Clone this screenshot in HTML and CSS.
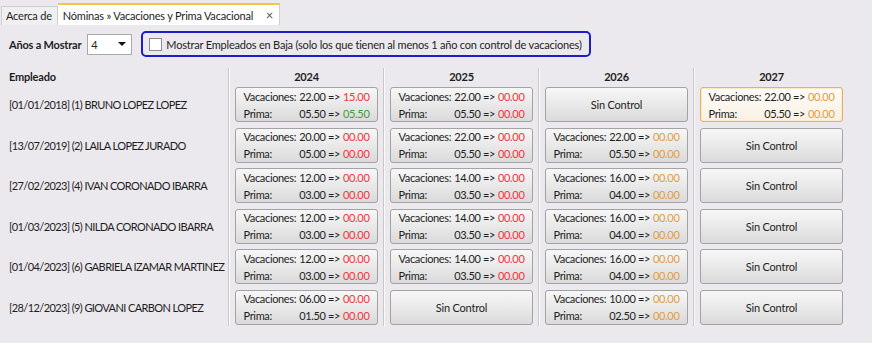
FILE: index.html
```html
<!DOCTYPE html>
<html lang="es">
<head>
    <meta charset="UTF-8">
    <title>Nóminas » Vacaciones y Prima Vacacional</title>
    <link rel="stylesheet" href="styles.css">
</head>
<body>

    <!-- Pestañas -->
    <div class="tabs">
        <div class="tab">Acerca de</div>
        <div class="tab active">Nóminas » Vacaciones y Prima Vacacional <span class="close">×</span></div>
    </div>

    <!-- Filtros -->
    <div class="toolbar">
        <span class="lbl">Años a Mostrar</span>
        <div class="combo"><span>4</span><span class="arrow"></span></div>
        <label class="baja">
            <span class="check"></span>
            Mostrar Empleados en Baja (solo los que tienen al menos 1 año con control de vacaciones)
        </label>
    </div>

    <!-- Tabla de años -->
    <div class="grid">
        <div class="emp-col">
            <div class="head">Empleado</div>
            <div class="name">[01/01/2018] (1) BRUNO LOPEZ LOPEZ</div>
            <div class="name">[13/07/2019] (2) LAILA LOPEZ JURADO</div>
            <div class="name">[27/02/2023] (4) IVAN CORONADO IBARRA</div>
            <div class="name">[01/03/2023] (5) NILDA CORONADO IBARRA</div>
            <div class="name">[01/04/2023] (6) GABRIELA IZAMAR MARTINEZ</div>
            <div class="name">[28/12/2023] (9) GIOVANI CARBON LOPEZ</div>
        </div>

        <div class="year-col">
            <div class="head year">2024</div>
            <div class="btn"><div class="vals">
                <span>Vacaciones:</span><span class="num">22.00 =&gt;</span><span class="red">15.00</span>
                <span>Prima:</span><span class="num">05.50 =&gt;</span><span class="green">05.50</span>
            </div></div>
            <div class="btn"><div class="vals">
                <span>Vacaciones:</span><span class="num">20.00 =&gt;</span><span class="red">00.00</span>
                <span>Prima:</span><span class="num">05.00 =&gt;</span><span class="red">00.00</span>
            </div></div>
            <div class="btn"><div class="vals">
                <span>Vacaciones:</span><span class="num">12.00 =&gt;</span><span class="red">00.00</span>
                <span>Prima:</span><span class="num">03.00 =&gt;</span><span class="red">00.00</span>
            </div></div>
            <div class="btn"><div class="vals">
                <span>Vacaciones:</span><span class="num">12.00 =&gt;</span><span class="red">00.00</span>
                <span>Prima:</span><span class="num">03.00 =&gt;</span><span class="red">00.00</span>
            </div></div>
            <div class="btn"><div class="vals">
                <span>Vacaciones:</span><span class="num">12.00 =&gt;</span><span class="red">00.00</span>
                <span>Prima:</span><span class="num">03.00 =&gt;</span><span class="red">00.00</span>
            </div></div>
            <div class="btn"><div class="vals">
                <span>Vacaciones:</span><span class="num">06.00 =&gt;</span><span class="red">00.00</span>
                <span>Prima:</span><span class="num">01.50 =&gt;</span><span class="red">00.00</span>
            </div></div>
        </div>

        <div class="year-col">
            <div class="head year">2025</div>
            <div class="btn"><div class="vals">
                <span>Vacaciones:</span><span class="num">22.00 =&gt;</span><span class="red">00.00</span>
                <span>Prima:</span><span class="num">05.50 =&gt;</span><span class="red">00.00</span>
            </div></div>
            <div class="btn"><div class="vals">
                <span>Vacaciones:</span><span class="num">22.00 =&gt;</span><span class="red">00.00</span>
                <span>Prima:</span><span class="num">05.50 =&gt;</span><span class="red">00.00</span>
            </div></div>
            <div class="btn"><div class="vals">
                <span>Vacaciones:</span><span class="num">14.00 =&gt;</span><span class="red">00.00</span>
                <span>Prima:</span><span class="num">03.50 =&gt;</span><span class="red">00.00</span>
            </div></div>
            <div class="btn"><div class="vals">
                <span>Vacaciones:</span><span class="num">14.00 =&gt;</span><span class="red">00.00</span>
                <span>Prima:</span><span class="num">03.50 =&gt;</span><span class="red">00.00</span>
            </div></div>
            <div class="btn"><div class="vals">
                <span>Vacaciones:</span><span class="num">14.00 =&gt;</span><span class="red">00.00</span>
                <span>Prima:</span><span class="num">03.50 =&gt;</span><span class="red">00.00</span>
            </div></div>
            <div class="btn">Sin Control</div>
        </div>

        <div class="year-col">
            <div class="head year">2026</div>
            <div class="btn">Sin Control</div>
            <div class="btn"><div class="vals">
                <span>Vacaciones:</span><span class="num">22.00 =&gt;</span><span class="orange">00.00</span>
                <span>Prima:</span><span class="num">05.50 =&gt;</span><span class="orange">00.00</span>
            </div></div>
            <div class="btn"><div class="vals">
                <span>Vacaciones:</span><span class="num">16.00 =&gt;</span><span class="orange">00.00</span>
                <span>Prima:</span><span class="num">04.00 =&gt;</span><span class="orange">00.00</span>
            </div></div>
            <div class="btn"><div class="vals">
                <span>Vacaciones:</span><span class="num">16.00 =&gt;</span><span class="orange">00.00</span>
                <span>Prima:</span><span class="num">04.00 =&gt;</span><span class="orange">00.00</span>
            </div></div>
            <div class="btn"><div class="vals">
                <span>Vacaciones:</span><span class="num">16.00 =&gt;</span><span class="orange">00.00</span>
                <span>Prima:</span><span class="num">04.00 =&gt;</span><span class="orange">00.00</span>
            </div></div>
            <div class="btn"><div class="vals">
                <span>Vacaciones:</span><span class="num">10.00 =&gt;</span><span class="orange">00.00</span>
                <span>Prima:</span><span class="num">02.50 =&gt;</span><span class="orange">00.00</span>
            </div></div>
        </div>

        <div class="year-col">
            <div class="head year">2027</div>
            <div class="btn hover"><div class="vals">
                <span>Vacaciones:</span><span class="num">22.00 =&gt;</span><span class="orange">00.00</span>
                <span>Prima:</span><span class="num">05.50 =&gt;</span><span class="orange">00.00</span>
            </div></div>
            <div class="btn">Sin Control</div>
            <div class="btn">Sin Control</div>
            <div class="btn">Sin Control</div>
            <div class="btn">Sin Control</div>
            <div class="btn">Sin Control</div>
        </div>
    </div>

</body>
</html>
```

FILE: styles.css
```css
body {
    margin: 0;
    background: #ebe9ed;
    font-family: Lato, "Liberation Sans", sans-serif;
    font-size: 11px;
    letter-spacing: -0.2px;
    color: #1e1e1e;
    white-space: nowrap;
}

/* Pestañas */
.tabs {
    display: flex;
    align-items: flex-end;
    height: 25px;
    padding-left: 1px;
}

.tab {
    height: 18px;
    line-height: 18px;
    padding: 0 5px 0 4px;
    background: #f0f0f0;
    border: 1px solid #cfcfcf;
    border-bottom: none;
}

.tab.active {
    height: 20px;
    line-height: 20px;
    background: #fff;
    border-top: 2px solid #f3c64a;
    border-left: none;
    padding: 0 6px 0 5px;
}

.tab .close {
    margin-left: 10px;
    color: #555;
    font-size: 13px;
}

/* Filtros */
.toolbar {
    display: flex;
    align-items: center;
    margin-top: 6px;
    padding-left: 9px;
    height: 26px;
}

.lbl {
    font-weight: bold;
    margin-right: 6px;
}

.combo {
    display: flex;
    align-items: center;
    justify-content: space-between;
    width: 35px;
    height: 19px;
    padding: 0 5px 0 3px;
    background: #fff;
    border: 1px solid #a9a9a9;
}

.combo .arrow {
    width: 0;
    height: 0;
    border-left: 4px solid transparent;
    border-right: 4px solid transparent;
    border-top: 4px solid #111;
}

.baja {
    display: flex;
    align-items: center;
    margin-left: 9px;
    height: 22px;
    padding: 0 7px 0 6px;
    border: 2px solid #1d1dc9;
    border-radius: 5px;
}

.check {
    width: 11px;
    height: 11px;
    margin-right: 4px;
    background: #fff;
    border: 1px solid #8d8d8d;
}

/* Tabla */
.grid {
    display: flex;
    margin-top: 11px;
}

.emp-col {
    width: 228px;
    padding-left: 9px;
    box-sizing: border-box;
}

.year-col {
    width: 155px;
    border-left: 1px solid #c8c8c8;
    box-shadow: inset 1px 0 0 #fafafa;
    padding: 0 5px 0 6px;
    box-sizing: border-box;
}

.head {
    height: 19px;
    line-height: 17px;
    font-weight: bold;
}

.head.year {
    text-align: center;
}

.name {
    height: 35px;
    line-height: 35px;
    margin-bottom: 5.6px;
    letter-spacing: -0.6px;
}

.btn {
    height: 35px;
    margin-bottom: 5.6px;
    box-sizing: border-box;
    border: 1px solid #a3a3a3;
    border-radius: 3px;
    background: linear-gradient(#f7f7f7, #e6e6e6 60%, #dadada);
    display: flex;
    align-items: center;
    justify-content: center;
}

.year-col .btn:last-child,
.emp-col .name:last-child {
    margin-bottom: 1px;
}

.btn.hover {
    border-color: #e2b266;
    box-shadow: inset 0 0 0 1px #fbe9c8;
    background: linear-gradient(#fefcf9, #f9f1e4);
}

.vals {
    display: grid;
    grid-template-columns: auto auto auto;
    column-gap: 3px;
    line-height: 17px;
    letter-spacing: -0.35px;
}

.num {
    text-align: right;
}

.red {
    color: #f5343c;
}

.green {
    color: #3d9b3d;
}

.orange {
    color: #e39d3c;
}
```
